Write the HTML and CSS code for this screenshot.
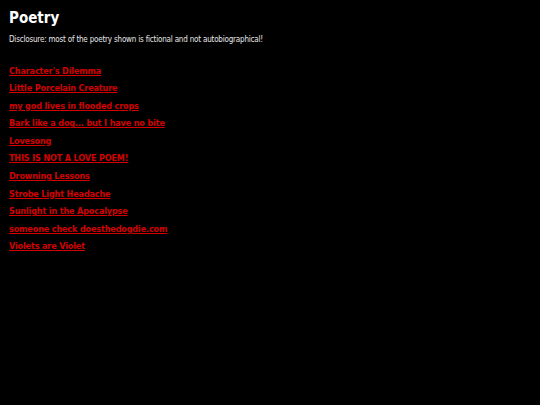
FILE: index.html
```html
<!DOCTYPE html>
<html>
<head>
<meta charset="utf-8">
<link rel="stylesheet" href="styles.css">
</head>
<body>
<h1 class="title">Poetry</h1>
<p class="note">Disclosure: most of the poetry shown is fictional and not autobiographical!</p>
<ul class="poems">
<li><a href="#">Character's Dilemma</a></li>
<li><a href="#">Little Porcelain Creature</a></li>
<li><a href="#">my god lives in flooded crops</a></li>
<li><a href="#">Bark like a dog... but I have no bite</a></li>
<li><a href="#">Lovesong</a></li>
<li><a href="#">THIS IS NOT A LOVE POEM!</a></li>
<li><a href="#">Drowning Lessons</a></li>
<li><a href="#">Strobe Light Headache</a></li>
<li><a href="#">Sunlight in the Apocalypse</a></li>
<li><a href="#">someone check doesthedogdie.com</a></li>
<li><a href="#">Violets are Violet</a></li>
</ul>
</body>
</html>
```
FILE: styles.css
```css
html, body {
  background: #000;
}
body {
  margin: 0;
  padding: 9px 9px;
  font-family: "DejaVu Sans Condensed", "DejaVu Sans", Verdana, sans-serif;
  color: #fff;
}
.title {
  margin: 0;
  font-size: 15px;
  font-weight: bold;
  line-height: 18px;
}
.note {
  margin: 7px 0 0;
  font-size: 8px;
  line-height: 12px;
  letter-spacing: -0.2px;
  color: #e8e8e8;
}
.poems {
  list-style: none;
  margin: 13.5px 0 0;
  padding: 0;
}
.poems li {
  height: 17.6px;
  line-height: 17.6px;
}
.poems a {
  color: #d40000;
  font-weight: bold;
  font-size: 9px;
  letter-spacing: -0.15px;
  text-decoration: underline;
}
```
